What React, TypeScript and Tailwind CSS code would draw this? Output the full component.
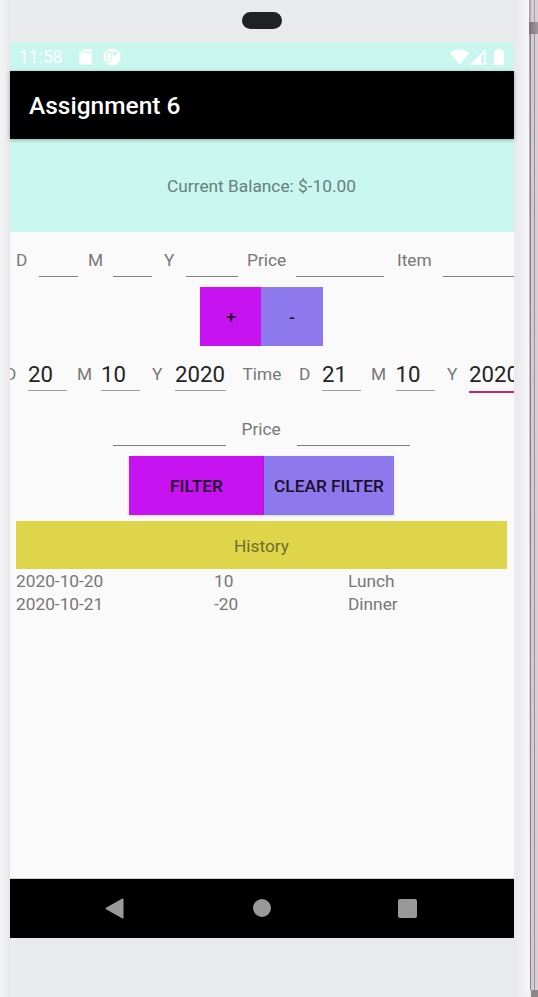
import React from "react";

type FieldProps = { label: string; value?: string; labelClass: string; lineClass: string; focused?: boolean; filled?: boolean };

function Field({ label, value = "", labelClass, lineClass, focused, filled }: FieldProps) {
  const line = focused ? "border-b-2 border-[#d02562]" : filled ? "border-b border-[#a0a0a0]" : "border-b border-[#808080]";
  return (
    <div className="flex shrink-0">
      <span className={`shrink-0 pt-[18px] ${labelClass}`}>{label}</span>
      <div className={`shrink-0 overflow-hidden whitespace-nowrap pt-[13px] text-[22.2px] leading-[31px] text-[#242424] ${focused ? "h-[47px]" : "h-[45px]"} ${line} ${lineClass}`}>
        {value}
      </div>
    </div>
  );
}

function StatusBar() {
  return (
    <div className="flex h-[29px] shrink-0 items-center bg-[#c9f6ef] pl-[9px] pr-[10px] text-white">
      <span className="w-[60px] text-[17.5px] leading-5">11:58</span>
      <svg width="13" height="16" viewBox="0 0 13 16" fill="currentColor">
        <path d="M5 0H11.500Q12.700 0 12.700 1.200V14.300Q12.700 15.500 11.500 15.500H1.300Q.2 15.500 .2 14.300V5Z" />
        <path d="M5.600 2v3.200M8.100 2v3.200M10.600 2v3.200" stroke="#c9f6ef" strokeWidth="1" />
      </svg>
      <svg className="ml-[11px]" width="18" height="18" viewBox="0 0 18 18">
        <circle cx="9" cy="9" r="8.600" fill="white" />
        <path d="M8 3.900H5.700Q3.700 3.900 3.700 5.900V12.200Q3.700 14.200 5.800 14.200Q8 14.200 8 12.200Z" fill="none" stroke="#c9f6ef" strokeWidth="1.100" />
        <path d="M9.600 3.400h3.300q1.300.2 1.300 1.800t-1.500 2.300h-1.200q-1.900-.3-1.900-2z" fill="#c9f6ef" />
      </svg>
      <svg className="ml-auto" width="19" height="16" viewBox="0 0 19 16" fill="currentColor">
        <path d="M0 4.200C5-1.200 14-1.200 19 4.200L9.500 15.500Z" />
      </svg>
      <svg className="ml-[1px]" width="16" height="16" viewBox="0 0 16 16">
        <path fillRule="evenodd" fill="white" d="M0 15.800L15.800 0V15.800ZM11.200 7V14H14.300V4.800Q12.300 5.300 11.200 7Z" />
      </svg>
      <svg className="ml-2" width="10" height="16" viewBox="0 0 10 16" fill="currentColor">
        <path d="M3 0h4v1.600h2q1 0 1 1V15q0 1-1 1H1q-1 0-1-1V2.600q0-1 1-1h2z" />
      </svg>
    </div>
  );
}

function NavigationBar() {
  return (
    <div className="flex h-[59px] shrink-0 items-center bg-black pb-px pl-[95px] text-[#999]">
      <svg width="19" height="21" viewBox="0 0 19 21" fill="currentColor">
        <path d="M1 9.700L17.400.5Q18.500.2 18.500 1.300V19.700Q18.500 20.800 17.400 20.400L1 11.300Q0 10.500 1 9.700Z" />
      </svg>
      <div className="ml-[128.5px] size-[18px] rounded-full bg-[#999]" />
      <div className="ml-[127px] size-[19px] rounded-[2px] bg-[#999]" />
    </div>
  );
}

const history = [
  { date: "2020-10-20", price: "10", item: "Lunch" },
  { date: "2020-10-21", price: "-20", item: "Dinner" },
];

export default function App() {
  return (
    <div className="flex h-[997px] w-[538px] overflow-hidden bg-[#e9eaec] font-['Roboto',sans-serif] text-[17.3px] leading-5 text-[#777]">
      <div className="w-[10px] shrink-0 bg-linear-to-r from-[#f3f3f5] via-[#eeeef0] to-[#e7e7e9]" />
      <div className="flex w-[504px] shrink-0 flex-col">
        <div className="flex h-[42px] shrink-0 justify-center pt-3">
          <div className="mr-px h-[17px] w-[40px] rounded-full bg-[#202125]" />
        </div>
        <StatusBar />
        <header className="relative flex h-[68px] shrink-0 items-center bg-black pl-[19px] pt-[2px] text-[24.5px] font-medium text-white shadow-[0_1px_4px_rgba(0,0,0,0.3)]">
          Assignment 6
        </header>
        <main className="flex min-h-0 flex-1 flex-col overflow-hidden border-b border-[#d0d0d0] bg-[#fafafa]">
          <div className="flex h-[93px] shrink-0 items-center justify-center bg-[#c9f6ef] pr-px pt-px text-[#66807c]">Current Balance: $-10.00</div>

          <div className="flex h-[55px] shrink-0 overflow-hidden pl-1.5">
            <Field label="D" labelClass="w-[23px]" lineClass="w-[39px]" />
            <Field label="M" labelClass="ml-[10px] w-[25px]" lineClass="w-[39px]" />
            <Field label="Y" labelClass="ml-3 w-[22px]" lineClass="w-[52px]" />
            <Field label="Price" labelClass="ml-[9px] w-[49px]" lineClass="w-[88px]" />
            <Field label="Item" labelClass="ml-[13px] w-[46px]" lineClass="w-[100px]" />
          </div>

          <div className="flex h-[59px] shrink-0 justify-center pr-[1px] font-medium text-[#1c1028]">
            <button className="w-[61px] bg-[#c613ef] pl-px">+</button>
            <button className="w-[62px] bg-[#8d78ee]">-</button>
          </div>

          <div className="flex h-[55px] shrink-0 overflow-hidden">
            <Field filled label="D" value="20" labelClass="-ml-[5px] w-[23px]" lineClass="w-[39px]" />
            <Field filled label="M" value="10" labelClass="ml-[10px] w-[24px]" lineClass="w-[39px]" />
            <Field filled label="Y" value="2020" labelClass="ml-[12px] w-[23px]" lineClass="w-[51px]" />
            <span className="ml-[16.5px] w-[56.5px] shrink-0 pt-[18px]">Time</span>
            <Field filled label="D" value="21" labelClass="w-[23px]" lineClass="w-[39px]" />
            <Field filled label="M" value="10" labelClass="ml-[10px] w-[24.5px]" lineClass="w-[39px]" />
            <Field filled focused label="Y" value="2020" labelClass="ml-[12.5px] w-[22px]" lineClass="w-[52px]" />
          </div>

          <div className="flex h-[55px] shrink-0 pl-[103px]">
            <div className="h-[45px] w-[113px] border-b border-[#808080]" />
            <Field label="Price" labelClass="ml-[15.5px] w-[55.5px]" lineClass="w-[113px]" />
          </div>

          <div className="flex h-[59px] shrink-0 pl-[119px] font-medium text-[#1c1028]">
            <button className="w-[135px] bg-[#c613ef] pt-px shadow-sm">FILTER</button>
            <button className="w-[130px] whitespace-nowrap bg-[#8d78ee] pt-px shadow-sm">CLEAR FILTER</button>
          </div>

          <div className="ml-1.5 mt-1.5 flex h-[48px] w-[491px] shrink-0 items-center justify-center bg-[#ded54a] pt-px text-[#706c2c]">History</div>
          <div className="pl-1.5">
            {history.map((row) => (
              <div key={row.date} className="flex h-[23px] items-center">
                <span className="w-[198px]">{row.date}</span>
                <span className="w-[134px]">{row.price}</span>
                <span>{row.item}</span>
              </div>
            ))}
          </div>
        </main>
        <NavigationBar />
        <div className="h-[59px] shrink-0" />
      </div>
      <div className="w-[15px] shrink-0 bg-linear-to-r from-[#e9e9eb] via-[#efeff2] to-[#f6f6f8]" />
      <div className="flex flex-1 flex-col">
        <div className="flex h-[22px]">
          <div className="w-[2px] bg-[#aaa5a8]" />
          <div className="w-[3px] bg-[#d5cbd0]" />
          <div className="w-px bg-[#aaa1a5]" />
          <div className="flex-1 bg-[#d9d0d3]" />
        </div>
        <div className="h-[12px] bg-linear-to-r from-[#777176] to-[#a49b9f]" />
        <div className="flex flex-1">
          <div className="w-px bg-linear-to-b from-[#aaa5a8] to-[#f3f3f5]" />
          <div className="w-px bg-[#858085]" />
          <div className="w-[3px] bg-[#d5cbd0]" />
          <div className="w-px bg-[#9b9296]" />
          <div className="flex-1 bg-[#d9d0d3]" />
        </div>
        <div className="ml-[2px] h-[7px] bg-[#8d8588]" />
      </div>
    </div>
  );
}
